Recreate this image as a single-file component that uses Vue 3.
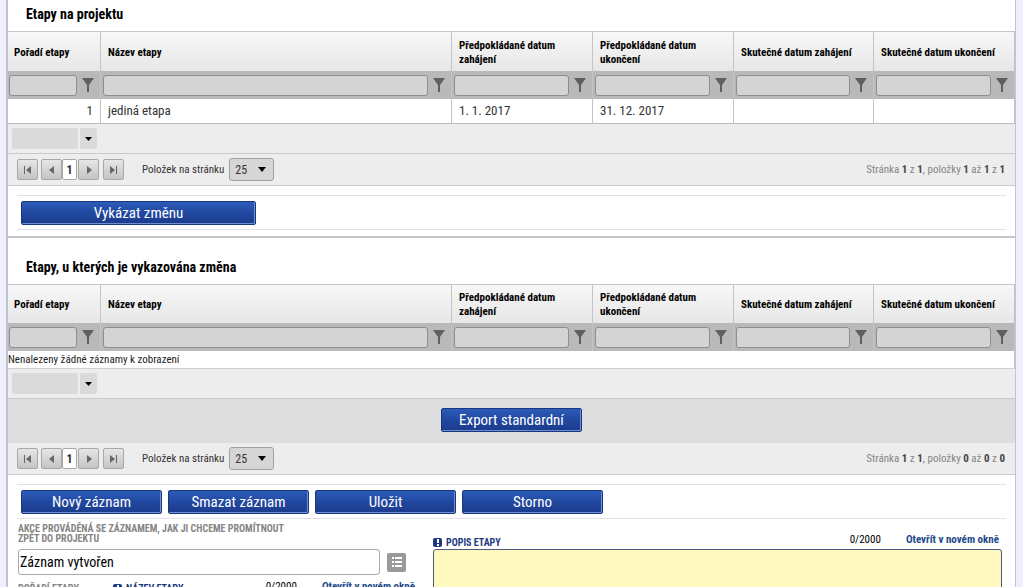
<script setup>
import { ref } from 'vue'

const columns = [
  { key: 'order', label: 'Pořadí etapy' },
  { key: 'name', label: 'Název etapy' },
  { key: 'planStart', label: 'Předpokládané datum zahájení' },
  { key: 'planEnd', label: 'Předpokládané datum ukončení' },
  { key: 'realStart', label: 'Skutečné datum zahájení' },
  { key: 'realEnd', label: 'Skutečné datum ukončení' },
]

const grids = [
  {
    id: 'project',
    title: 'Etapy na projektu',
    rows: [
      { order: '1', name: 'jediná etapa', planStart: '1. 1. 2017', planEnd: '31. 12. 2017', realStart: '', realEnd: '' },
    ],
    exportLabel: '',
    from: 1,
    to: 1,
    total: 1,
    actions: ['Vykázat změnu'],
  },
  {
    id: 'changed',
    title: 'Etapy, u kterých je vykazována změna',
    rows: [],
    exportLabel: 'Export standardní',
    from: 0,
    to: 0,
    total: 0,
    actions: ['Nový záznam', 'Smazat záznam', 'Uložit', 'Storno'],
  },
]

const pagerIcons = [
  { label: 'První stránka', d: 'M1 1h1v8H1zM8 1v8L3 5z' },
  { label: 'Předchozí stránka', d: 'M7 1v8L2 5z' },
  { label: 'Další stránka', d: 'M3 1v8l5-4z' },
  { label: 'Poslední stránka', d: 'M1 1v8l5-4zM7 1h1v8H7z' },
]

const action = ref('Záznam vytvořen')
const description = ref('')
</script>

<template>
  <div class="page">
    <main class="panel">
      <section v-for="grid in grids" :key="grid.id" class="block" :class="grid.id">
        <h2>{{ grid.title }}</h2>
        <table>
          <colgroup>
            <col v-for="c in columns" :key="c.key" :class="'col-' + c.key" />
          </colgroup>
          <thead>
            <tr class="head">
              <th v-for="c in columns" :key="c.key" scope="col">{{ c.label }}</th>
            </tr>
            <tr class="filters">
              <td v-for="c in columns" :key="c.key">
                <div class="filter">
                  <input type="text" :aria-label="'Filtr: ' + c.label" />
                  <button type="button" :aria-label="'Filtrovat: ' + c.label">
                    <svg viewBox="0 0 12 14" width="12" height="14"><path d="M0 0h12L7 7v7H5V7z" /></svg>
                  </button>
                </div>
              </td>
            </tr>
          </thead>
          <tbody>
            <tr v-for="row in grid.rows" :key="row.order" class="data">
              <td v-for="c in columns" :key="c.key" :class="{ num: c.key === 'order' }">{{ row[c.key] }}</td>
            </tr>
            <tr v-if="!grid.rows.length" class="empty">
              <td :colspan="columns.length">Nenalezeny žádné záznamy k zobrazení</td>
            </tr>
          </tbody>
        </table>
        <div class="summary">
          <span class="summary-value"></span>
          <button type="button" aria-label="Souhrn">
            <svg viewBox="0 0 7 4" width="7" height="4"><path d="M0 0h7L3.500 4z" /></svg>
          </button>
        </div>
        <div v-if="grid.exportLabel" class="export">
          <button type="button" class="action">{{ grid.exportLabel }}</button>
        </div>
        <nav class="pager" aria-label="Stránkování">
          <button v-for="p in pagerIcons.slice(0, 2)" :key="p.label" type="button" class="step" :aria-label="p.label">
            <svg viewBox="0 0 10 10" width="10" height="10"><path :d="p.d" /></svg>
          </button>
          <button type="button" class="current">1</button>
          <button v-for="p in pagerIcons.slice(2)" :key="p.label" type="button" class="step" :aria-label="p.label">
            <svg viewBox="0 0 10 10" width="10" height="10"><path :d="p.d" /></svg>
          </button>
          <label :for="grid.id + '-size'">Položek na stránku</label>
          <span class="size">
            <select :id="grid.id + '-size'"><option>25</option><option>50</option></select>
            <svg viewBox="0 0 8 5" width="8" height="5"><path d="M0 0h8L4 5z" /></svg>
          </span>
          <p>
            Stránka <b>1</b> z <b>1</b>, položky <b>{{ grid.from }}</b> až <b>{{ grid.to }}</b> z <b>{{ grid.total }}</b>
          </p>
        </nav>
        <div class="actions">
          <button v-for="a in grid.actions" :key="a" type="button" class="action">{{ a }}</button>
        </div>
      </section>

      <form class="details" @submit.prevent>
        <div class="left">
          <label for="action" class="caption">Akce prováděná se záznamem, jak ji chceme promítnout zpět do projektu</label>
          <div class="choice">
            <input id="action" v-model="action" type="text" />
            <button type="button" aria-label="Vybrat ze seznamu">
              <svg viewBox="0 0 12 12" width="12" height="12">
                <path d="M1 1h2v2H1zM4 1h7v2H4zM1 5h2v2H1zM4 5h7v2H4zM1 9h2v2H1zM4 9h7v2H4z" />
              </svg>
            </button>
          </div>
          <div class="line next">
            <label for="order" class="caption order">Pořadí etapy</label>
            <label for="name" class="caption required">
              <svg viewBox="0 0 9 9" width="9" height="9"><rect width="9" height="9" rx="2" /><path d="M4 1h2v4H4zM4 6h2v2H4z" /></svg>
              Název etapy
            </label>
            <span class="count">0/2000</span>
            <a href="#">Otevřít v novém okně</a>
          </div>
          <div class="line fields">
            <input id="order" type="text" />
            <input id="name" type="text" />
          </div>
        </div>
        <div class="right">
          <div class="line">
            <label for="description" class="caption required">
              <svg viewBox="0 0 9 9" width="9" height="9"><rect width="9" height="9" rx="2" /><path d="M4 1h2v4H4zM4 6h2v2H4z" /></svg>
              Popis etapy
            </label>
            <span class="count">0/2000</span>
            <a href="#">Otevřít v novém okně</a>
          </div>
          <textarea id="description" v-model="description"></textarea>
        </div>
      </form>
    </main>
  </div>
</template>

<style>
body {
  background: #eef0fe;
}
</style>

<style scoped>
.page {
  box-sizing: border-box;
  height: 100vh;
  overflow: hidden;
  padding: 0 7px 0 6px;
  background: #eef0fe;
  color: #000;
  font-family: "Roboto Condensed", "Liberation Sans Narrow", sans-serif;
  font-size: 11px;
  line-height: 14px;
}
.page * {
  box-sizing: border-box;
}
button,
input,
select,
textarea {
  margin: 0;
  padding: 0;
  font: inherit;
  color: inherit;
}
svg {
  display: block;
}
.panel {
  background: #fff;
  border: solid #c2c3cb;
  border-width: 0 1px 0 2px;
}
h2 {
  margin: 0;
  padding: 6px 18px 9px;
  font-size: 14px;
  line-height: 16px;
  font-weight: 700;
}
.changed h2 {
  padding-top: 21px;
}
table {
  width: 100%;
  table-layout: fixed;
  border-collapse: separate;
  border-spacing: 0;
  border-top: 1px solid #c6c6c6;
}
.col-order {
  width: 93px;
}
.col-planStart,
.col-planEnd,
.col-realEnd {
  width: 141px;
}
.col-realStart {
  width: 140px;
}
th,
td {
  padding: 0;
  text-align: left;
  border-right: 1px solid #c4c4c4;
}
th {
  height: 39px;
  padding: 2px 6px 0 7px;
  background: linear-gradient(#f7f7f7, #e7e7e7);
  font-weight: 700;
}
th:first-child {
  padding-left: 6px;
}
.changed th {
  height: 38px;
}
.filters td {
  height: 28px;
  background: #b9b9b9;
}
.filter {
  display: flex;
  align-items: center;
  gap: 5px;
  padding: 0 6px 0 2px;
}
.filters td:first-child .filter {
  padding-left: 1px;
}
.filter input {
  flex: 1;
  min-width: 0;
  height: 21px;
  border: 1px solid #8e8e8e;
  border-radius: 3px;
  background: #d4d4d4;
}
.filter button {
  border: 0;
  background: none;
  fill: #5f5f5f;
}
.data td {
  height: 25px;
  padding: 0 7px;
  border-bottom: 1px solid #bcbcbc;
  color: #333;
  font-size: 13px;
}
.data .num {
  text-align: right;
}
.empty td {
  height: 18px;
  border-bottom: 1px solid #d0d0d0;
  color: #222;
}
.summary {
  display: flex;
  align-items: center;
  gap: 2px;
  height: 30px;
  padding: 0 4px;
  background: #ededed;
  border-bottom: 1px solid #cacaca;
}
.summary-value {
  width: 66px;
  height: 21px;
  border-radius: 2px;
  background: #dadada;
}
.summary button {
  display: grid;
  place-items: center;
  width: 17px;
  height: 21px;
  border: 0;
  border-radius: 2px;
  background: #dadada;
}
.export {
  display: flex;
  justify-content: center;
  padding: 9px 0 11px;
  background: #dedede;
}
.action {
  width: 141px;
  height: 24px;
  border: 1px solid #17377f;
  border-radius: 2px;
  background: linear-gradient(#2c5bb9, #2148a0 50%, #1b3b8c);
  box-shadow: inset -1px -1px 0 #6f8fd0;
  color: #fff;
  font-size: 15px;
  line-height: 20px;
}
.project .action {
  width: 235px;
}
.pager {
  display: flex;
  align-items: center;
  height: 32px;
  padding: 0 10px 0 9px;
  background: #ededed;
  border-bottom: 1px solid #cacaca;
  color: #333;
}
.step,
.current {
  display: grid;
  place-items: center;
  height: 21px;
  border: 1px solid #a8a8a8;
  border-radius: 2px;
}
.step {
  width: 21px;
  background: linear-gradient(#e6e6e6, #c4c4c4);
  fill: #666;
}
.step:first-child {
  margin-right: 3px;
}
.step:nth-child(4) {
  margin-right: 4px;
}
.current {
  width: 15px;
  margin-right: 1px;
  background: #fff;
  font-size: 12px;
  font-weight: 700;
}
.pager label {
  margin-left: 18px;
}
.size {
  display: grid;
  align-items: center;
  margin-left: 5px;
}
.size select,
.size svg {
  grid-area: 1 / 1;
}
.size select {
  appearance: none;
  width: 45px;
  height: 23px;
  padding-left: 5px;
  border: 1px solid #a0a0a0;
  border-radius: 3px;
  background: #d6d6d6;
  font-size: 12px;
}
.size svg {
  justify-self: end;
  margin-right: 8px;
  pointer-events: none;
}
.pager p {
  margin: 0 0 0 auto;
  color: #858585;
}
.pager b {
  color: #444;
  font-weight: 700;
}
.actions {
  display: flex;
  gap: 6px;
  margin: 9px 9px 0 9px;
  padding: 5px 4px 4px;
  border: solid #e2e2e2;
  border-width: 1px 0;
}
.project {
  padding-bottom: 6px;
  border-bottom: 2px solid #c6c6c6;
}
.details {
  display: grid;
  grid-template-columns: 398px 1fr;
  gap: 17px;
  padding: 0 13px 0 10px;
}
.left {
  padding-top: 5px;
}
.caption {
  color: #858585;
  font-size: 10px;
  line-height: 10px;
  font-weight: 700;
  text-transform: uppercase;
}
.left > .caption {
  display: block;
  width: 280px;
}
.required {
  display: flex;
  align-items: center;
  gap: 4px;
  color: #1d3a80;
}
.required rect {
  fill: #1d3a80;
}
.required path {
  fill: #fff;
}
.choice {
  display: flex;
  align-items: center;
  gap: 7px;
  margin-top: 5px;
}
.choice input {
  width: 362px;
  height: 26px;
  padding: 0 1px;
  border: 1px solid #aaa;
  border-radius: 3px;
  background: #fff;
  font-size: 14px;
}
.choice button {
  display: grid;
  place-items: center;
  width: 19px;
  height: 19px;
  border: 0;
  border-radius: 2px;
  background: #999;
  fill: #fff;
}
.line {
  display: flex;
  align-items: center;
}
.count {
  margin-left: auto;
}
.line a {
  margin-left: 25px;
  color: #234a8c;
  font-weight: 700;
  text-decoration: none;
}
.next {
  margin-top: 5px;
  padding-right: 1px;
}
.next .caption {
  padding-top: 3px;
}
.order {
  width: 95px;
}
.fields {
  gap: 10px;
}
.fields input {
  width: 85px;
  height: 26px;
}
.fields #name {
  flex: 1;
}
.right .line {
  height: 30px;
  padding: 12px 3px 0 0;
}
.right .caption {
  padding-top: 5px;
}
.right textarea {
  display: block;
  width: 100%;
  height: 90px;
  border: 1px solid #4d5a7c;
  border-radius: 3px;
  background: #fff9c0;
  resize: none;
}
</style>
